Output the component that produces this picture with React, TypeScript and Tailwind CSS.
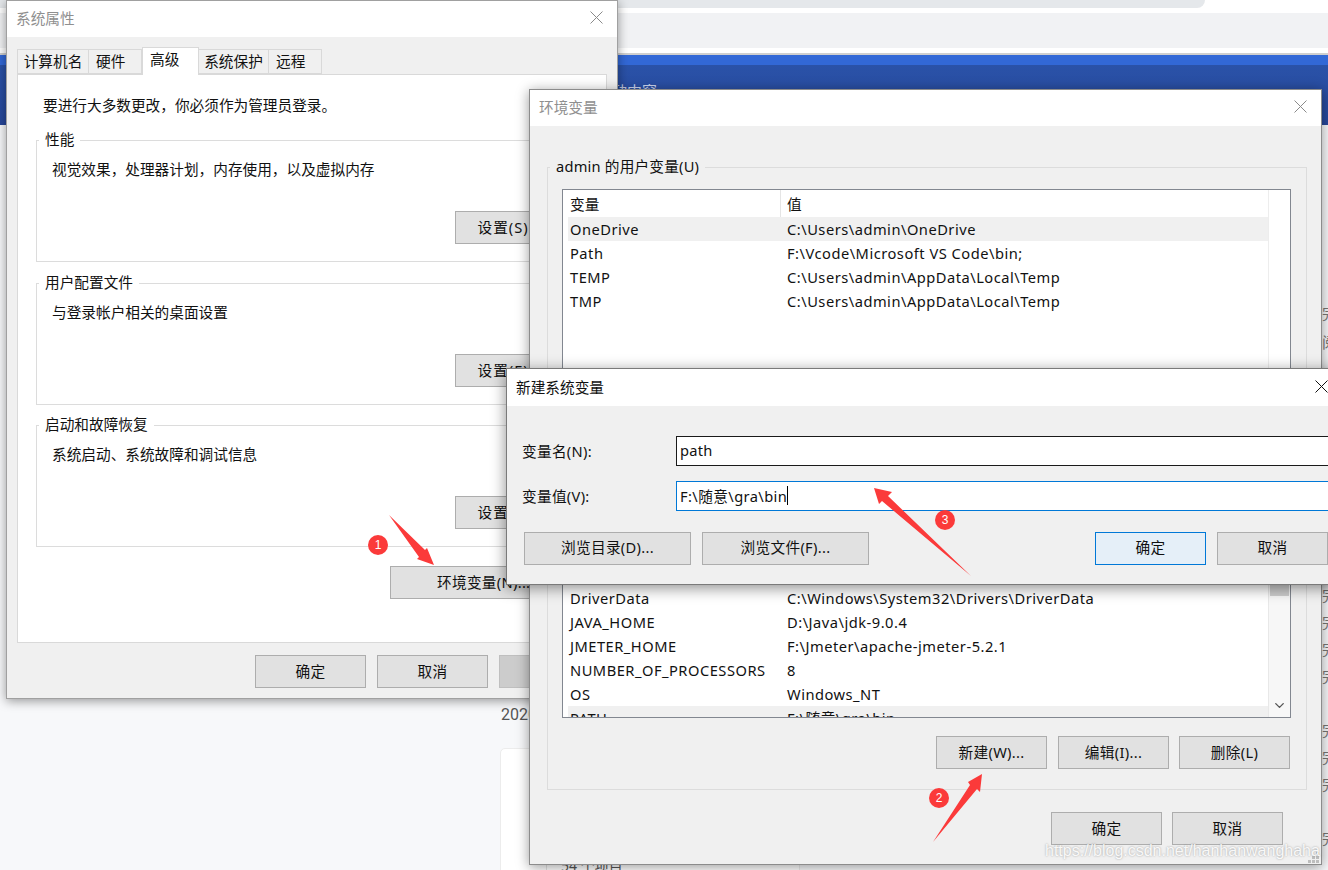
import { ReactNode } from "react";
import { ChevronDown } from "lucide-react";

function CloseX({ inactive }: { inactive?: boolean }) {
  return (
    <svg width="13" height="13" viewBox="0 0 13 13" className={inactive ? "text-[#8a8a8a]" : "text-[#111]"}>
      <path d="M0.5 0.5L12.5 12.5M12.5 0.5L0.5 12.5" stroke="currentColor" strokeWidth="1" fill="none" />
    </svg>
  );
}

function Btn({ children, className = "w-[111px]" }: { children?: ReactNode; className?: string }) {
  return (
    <div className={"h-[33px] shrink-0 flex items-center justify-center pb-[2px] tracking-[0.3px] border border-[#adadad] bg-[#e1e1e1] text-[#111] " + className}>
      {children}
    </div>
  );
}

function TitleBar({ title, inactive, xClass }: { title: string; inactive?: boolean; xClass: string }) {
  return (
    <div className={"h-[36px] shrink-0 bg-white flex items-center justify-between pl-[9px] pb-[3px] " + xClass + (inactive ? " text-[#8f8f8f]" : " text-[#111]")}>
      <span>{title}</span>
      <CloseX inactive={inactive} />
    </div>
  );
}

function PerfGroup({ legend, desc, btn, className = "" }: { legend: string; desc: string; btn: string; className?: string }) {
  return (
    <div className={"relative w-[561px] h-[122px] border border-[#dcdcdc] pl-[15px] " + className}>
      <span className="absolute left-[2px] -top-[12px] bg-white px-[6px] leading-[20px]">{legend}</span>
      <div className="pt-[18px] leading-[20px]">{desc}</div>
      <div className="mt-[32px] ml-[403px]">
        <Btn className="w-[111px] tracking-[1px]">{btn}</Btn>
      </div>
    </div>
  );
}

function Row({ name, value, selected }: { name: string; value: string; selected?: boolean }) {
  return (
    <div className={"h-[24px] shrink-0 flex items-center whitespace-nowrap ml-[5px] tracking-[0.5px] " + (selected ? "bg-[#f0f0f0]" : "")}>
      <span className="w-[219px] pl-[2px] shrink-0">{name}</span>
      <span>{value}</span>
    </div>
  );
}

function SystemPropsWindow() {
  return (
    <div className="absolute left-[6px] top-0 w-[612px] h-[699px] flex flex-col bg-[#f0f0f0] border border-[#a0a0a0] shadow-[0_2px_10px_rgba(0,0,0,0.4)]">
      <TitleBar title="系统属性" inactive xClass="pr-[14px]" />
      <div className="h-[37px] flex items-end pl-[10px] shrink-0">
        <div className="w-[72px] h-[25px] border border-[#d9d9d9] flex items-center justify-center pb-[2px]">计算机名</div>
        <div className="w-[53px] h-[25px] border border-l-0 border-[#d9d9d9] flex items-center pl-[7px] pb-[2px]">硬件</div>
        <div className="w-[57px] h-[28px] border border-b-0 border-[#d9d9d9] bg-white flex items-center pl-[7px] pb-[5px] -mb-[1px] relative">高级</div>
        <div className="w-[70px] h-[25px] border border-l-0 border-[#d9d9d9] flex items-center justify-center pb-[2px]">系统保护</div>
        <div className="w-[53px] h-[25px] border border-l-0 border-[#d9d9d9] flex items-center pl-[7px] pb-[2px]">远程</div>
      </div>
      <div className="ml-[10px] w-[590px] h-[569px] shrink-0 bg-white border border-[#d9d9d9] pl-[18px]">
        <div className="pt-[20px] pl-[7px] leading-[20px]">要进行大多数更改，你必须作为管理员登录。</div>
        <div className="mt-[25px] flex flex-col gap-[21px]">
          <PerfGroup legend="性能" desc="视觉效果，处理器计划，内存使用，以及虚拟内存" btn="设置(S)..." />
          <PerfGroup legend="用户配置文件" desc="与登录帐户相关的桌面设置" btn="设置(E)..." />
          <PerfGroup legend="启动和故障恢复" desc="系统启动、系统故障和调试信息" btn="设置(T)..." className="-mt-px" />
        </div>
        <div className="mt-[19px] ml-[354px]">
          <Btn className="w-[170px] justify-start pl-[46px]">环境变量(N)...</Btn>
        </div>
      </div>
      <div className="flex justify-end gap-[11px] pt-[12px] pr-[7px]">
        <Btn>确定</Btn>
        <Btn>取消</Btn>
        <Btn className="w-[111px] !bg-[#cccccc] !border-[#bfbfbf] !text-[#8a8a8a]">应用(A)</Btn>
      </div>
    </div>
  );
}

function EnvVarsWindow() {
  return (
    <div className="absolute left-[529px] top-[89px] w-[793px] h-[776px] flex flex-col bg-[#f0f0f0] border border-[#8c8c8c] shadow-[0_2px_12px_rgba(0,0,0,0.4)]">
      <TitleBar title="环境变量" inactive xClass="pr-[14px]" />
      <div className="pt-[41px] pl-[17px] flex flex-col">
        <div className="relative w-[760px] h-[242px] border border-[#dcdcdc] pl-[14px] pt-[21px] shrink-0">
          <span className="absolute left-[2px] -top-[12px] bg-[#f0f0f0] px-[6px] leading-[20px] tracking-[0.2px]">admin 的用户变量(U)</span>
          <div className="w-[729px] h-[200px] bg-white border border-[#828790] overflow-hidden">
            <div className="w-[706px] h-full border-r border-[#ededed]">
              <div className="h-[27px] flex items-center ml-[5px]">
                <span className="w-[213px] h-full pl-[2px] border-r border-[#e5e5e5] flex items-center shrink-0">变量</span>
                <span className="pl-[6px]">值</span>
              </div>
              <Row name="OneDrive" value="C:\Users\admin\OneDrive" selected />
              <Row name="Path" value="F:\Vcode\Microsoft VS Code\bin;" />
              <Row name="TEMP" value="C:\Users\admin\AppData\Local\Temp" />
              <Row name="TMP" value="C:\Users\admin\AppData\Local\Temp" />
            </div>
          </div>
        </div>
        <div className="relative mt-[20px] w-[760px] h-[361px] border border-[#dcdcdc] pl-[14px] pt-[21px] shrink-0">
          <span className="absolute left-[2px] -top-[12px] bg-[#f0f0f0] px-[6px] leading-[20px]">系统变量(S)</span>
          <div className="w-[729px] h-[267px] bg-white border border-[#828790] overflow-hidden flex">
            <div className="w-[705px] shrink-0 flex flex-col justify-end -mb-[13px]">
              <Row name="DriverData" value="C:\Windows\System32\Drivers\DriverData" />
              <Row name="JAVA_HOME" value="D:\Java\jdk-9.0.4" />
              <Row name="JMETER_HOME" value="F:\Jmeter\apache-jmeter-5.2.1" />
              <Row name="NUMBER_OF_PROCESSORS" value="8" />
              <Row name="OS" value="Windows_NT" />
              <Row name="PATH" value="F:\随意\gra\bin" selected />
            </div>
            <div className="flex-1 bg-[#f7f7f7] border-l border-[#e8e8e8] flex flex-col justify-end">
              <div className="h-[141px] flex flex-col justify-between pb-[4px] items-center">
                <div className="w-[19px] h-[20px] bg-[#cdcdcd]" />
                <ChevronDown size={15} strokeWidth={2.2} className="text-[#555]" />
              </div>
            </div>
          </div>
          <div className="mt-[18px] flex justify-end gap-[10px] pr-[16px]">
            <Btn className="w-[111px] mr-px">新建(W)...</Btn>
            <Btn>编辑(I)...</Btn>
            <Btn>删除(L)</Btn>
          </div>
        </div>
        <div className="mt-[22px] flex justify-end gap-[10px] w-[736px]">
          <Btn>确定</Btn>
          <Btn>取消</Btn>
        </div>
      </div>
    </div>
  );
}

function NewVarDialog() {
  return (
    <div className="absolute left-[506px] top-[368px] w-[850px] h-[217px] flex flex-col bg-[#f0f0f0] border border-[#7a7a7a] shadow-[0_3px_14px_rgba(0,0,0,0.45)]">
      <TitleBar title="新建系统变量" xClass="!h-[37px] !pb-[2px] pr-[27px]" />
      <div className="pt-[30px] pl-[16px] flex flex-col gap-[15px]">
        <div className="flex items-center h-[30px]">
          <span className="w-[154px] shrink-0 tracking-[0.3px] -ml-px pr-[1px] pb-[1px]">变量名(N):</span>
          <div className="w-[680px] h-full bg-white border border-[#1a1a1a] flex items-center pl-[3px] pb-[2px] tracking-[0.2px]">path</div>
        </div>
        <div className="flex items-center h-[30px]">
          <span className="w-[154px] shrink-0 tracking-[0.3px] -ml-px pr-[1px]">变量值(V):</span>
          <div className="w-[680px] h-full bg-white border border-[#0078d7] flex items-center pl-[3px] pb-[1px] tracking-[0.4px]">
            F:\随意\gra\bin<span className="w-px h-[19px] bg-black" />
          </div>
        </div>
      </div>
      <div className="mt-[21px] pl-[17px] pr-[27px] flex">
        <Btn className="w-[167px] !pb-[4px]">浏览目录(D)...</Btn>
        <Btn className="w-[167px] ml-[11px] !pb-[4px]">浏览文件(F)...</Btn>
        <Btn className="w-[111px] ml-auto !pb-[4px] !border-[#0078d7] !bg-[#e5eff8]">确定</Btn>
        <Btn className="w-[111px] ml-[11px] !pb-[4px]">取消</Btn>
      </div>
    </div>
  );
}

function Backdrop() {
  return (
    <div className="h-[870px] overflow-hidden flex flex-col bg-[#f7f8fa]">
      <div className="h-[53px] shrink-0 bg-white pb-[5px] flex flex-col">
        <div className="h-[8px] w-[1205px] shrink-0 bg-[#e5e8eb] rounded-br-[8px]" />
        <div className="mt-[5px] flex-1 bg-[#f1f2f4]" />
      </div>
      <div className="h-[2px] shrink-0 bg-[#cfcfcf]" />
      <div className="h-[10px] shrink-0 bg-[#3268d6]" />
      <div className="h-[60px] shrink-0 bg-gradient-to-b from-[#2a52a8] to-[#27479a] pl-[612px] pt-[16px] text-[#c9d4ee] text-[15px] leading-[20px]">动中窗</div>
      <div className="flex-1 pl-[501px] pt-[580px]">
        <div className="text-[16px] leading-[20px] text-[#555] font-['Roboto',sans-serif]">2020</div>
        <div className="mt-[23px] w-[300px] h-[200px] -ml-px bg-white border border-[#ececec] rounded-tl-[5px] pl-[45px]">
          <div className="h-full border-l border-[#e4e4e4] pl-[14px] pt-[107px] text-[#555] text-[14px] leading-[20px]">54 个项目</div>
        </div>
      </div>
    </div>
  );
}

function EdgeGlyphs() {
  const lower = ["完", "完", "完", "完", "", "完", "完", "完", "", "完"];
  return (
    <div className="absolute right-[-9px] top-[300px] flex flex-col text-[15px] leading-[27px] text-[#777]">
      <div className="h-[282px]">
        <div className="h-[29px]">完</div>
        <div>阅</div>
      </div>
      {lower.map((t, i) => (
        <div key={i} className="h-[27px]">
          {t}
        </div>
      ))}
    </div>
  );
}

function Badge({ n, className }: { n: string; className: string }) {
  return (
    <div className={"absolute w-[20px] h-[20px] rounded-full bg-[#fb3a3a] text-white text-[12px] flex items-center justify-center font-['Liberation_Sans',sans-serif] " + className}>
      {n}
    </div>
  );
}

function Annotations() {
  return (
    <>
      <svg width="1328" height="870" className="absolute left-0 top-0 pointer-events-none">
        <polygon points="389,515 425,550 427,548 434,565 417,559 419,557" fill="#fb3a3a" />
        <polygon points="933,842 970,785 968,782 982,774 980,792 977,789" fill="#fb3a3a" />
        <polygon points="971,576 882,501 879,504 874,488 892,492 888,496" fill="#fb3a3a" />
        <g fill="#bdbdbd">
          <rect x="1316" y="852" width="3" height="3" />
          <rect x="1312" y="856" width="3" height="3" />
          <rect x="1316" y="856" width="3" height="3" />
          <rect x="1308" y="860" width="3" height="3" />
          <rect x="1312" y="860" width="3" height="3" />
          <rect x="1316" y="860" width="3" height="3" />
        </g>
      </svg>
      <Badge n="1" className="left-[368px] top-[535px]" />
      <Badge n="2" className="left-[929px] top-[788px]" />
      <Badge n="3" className="left-[935px] top-[510px]" />
      <div className="absolute left-[1045px] top-[841px] text-[16px] leading-[20px] whitespace-nowrap text-white/90 [text-shadow:0_0_2px_rgba(120,120,120,0.75)] font-['Liberation_Sans',sans-serif]">
        https://blog.csdn.net/hanhanwanghaha
      </div>
    </>
  );
}

export default function App() {
  return (
    <div className="relative w-[1328px] h-[870px] overflow-hidden text-[14.67px] text-[#111] font-['Noto_Sans','Noto_Sans_CJK_SC',sans-serif]">
      <Backdrop />
      <EdgeGlyphs />
      <SystemPropsWindow />
      <EnvVarsWindow />
      <NewVarDialog />
      <Annotations />
    </div>
  );
}
